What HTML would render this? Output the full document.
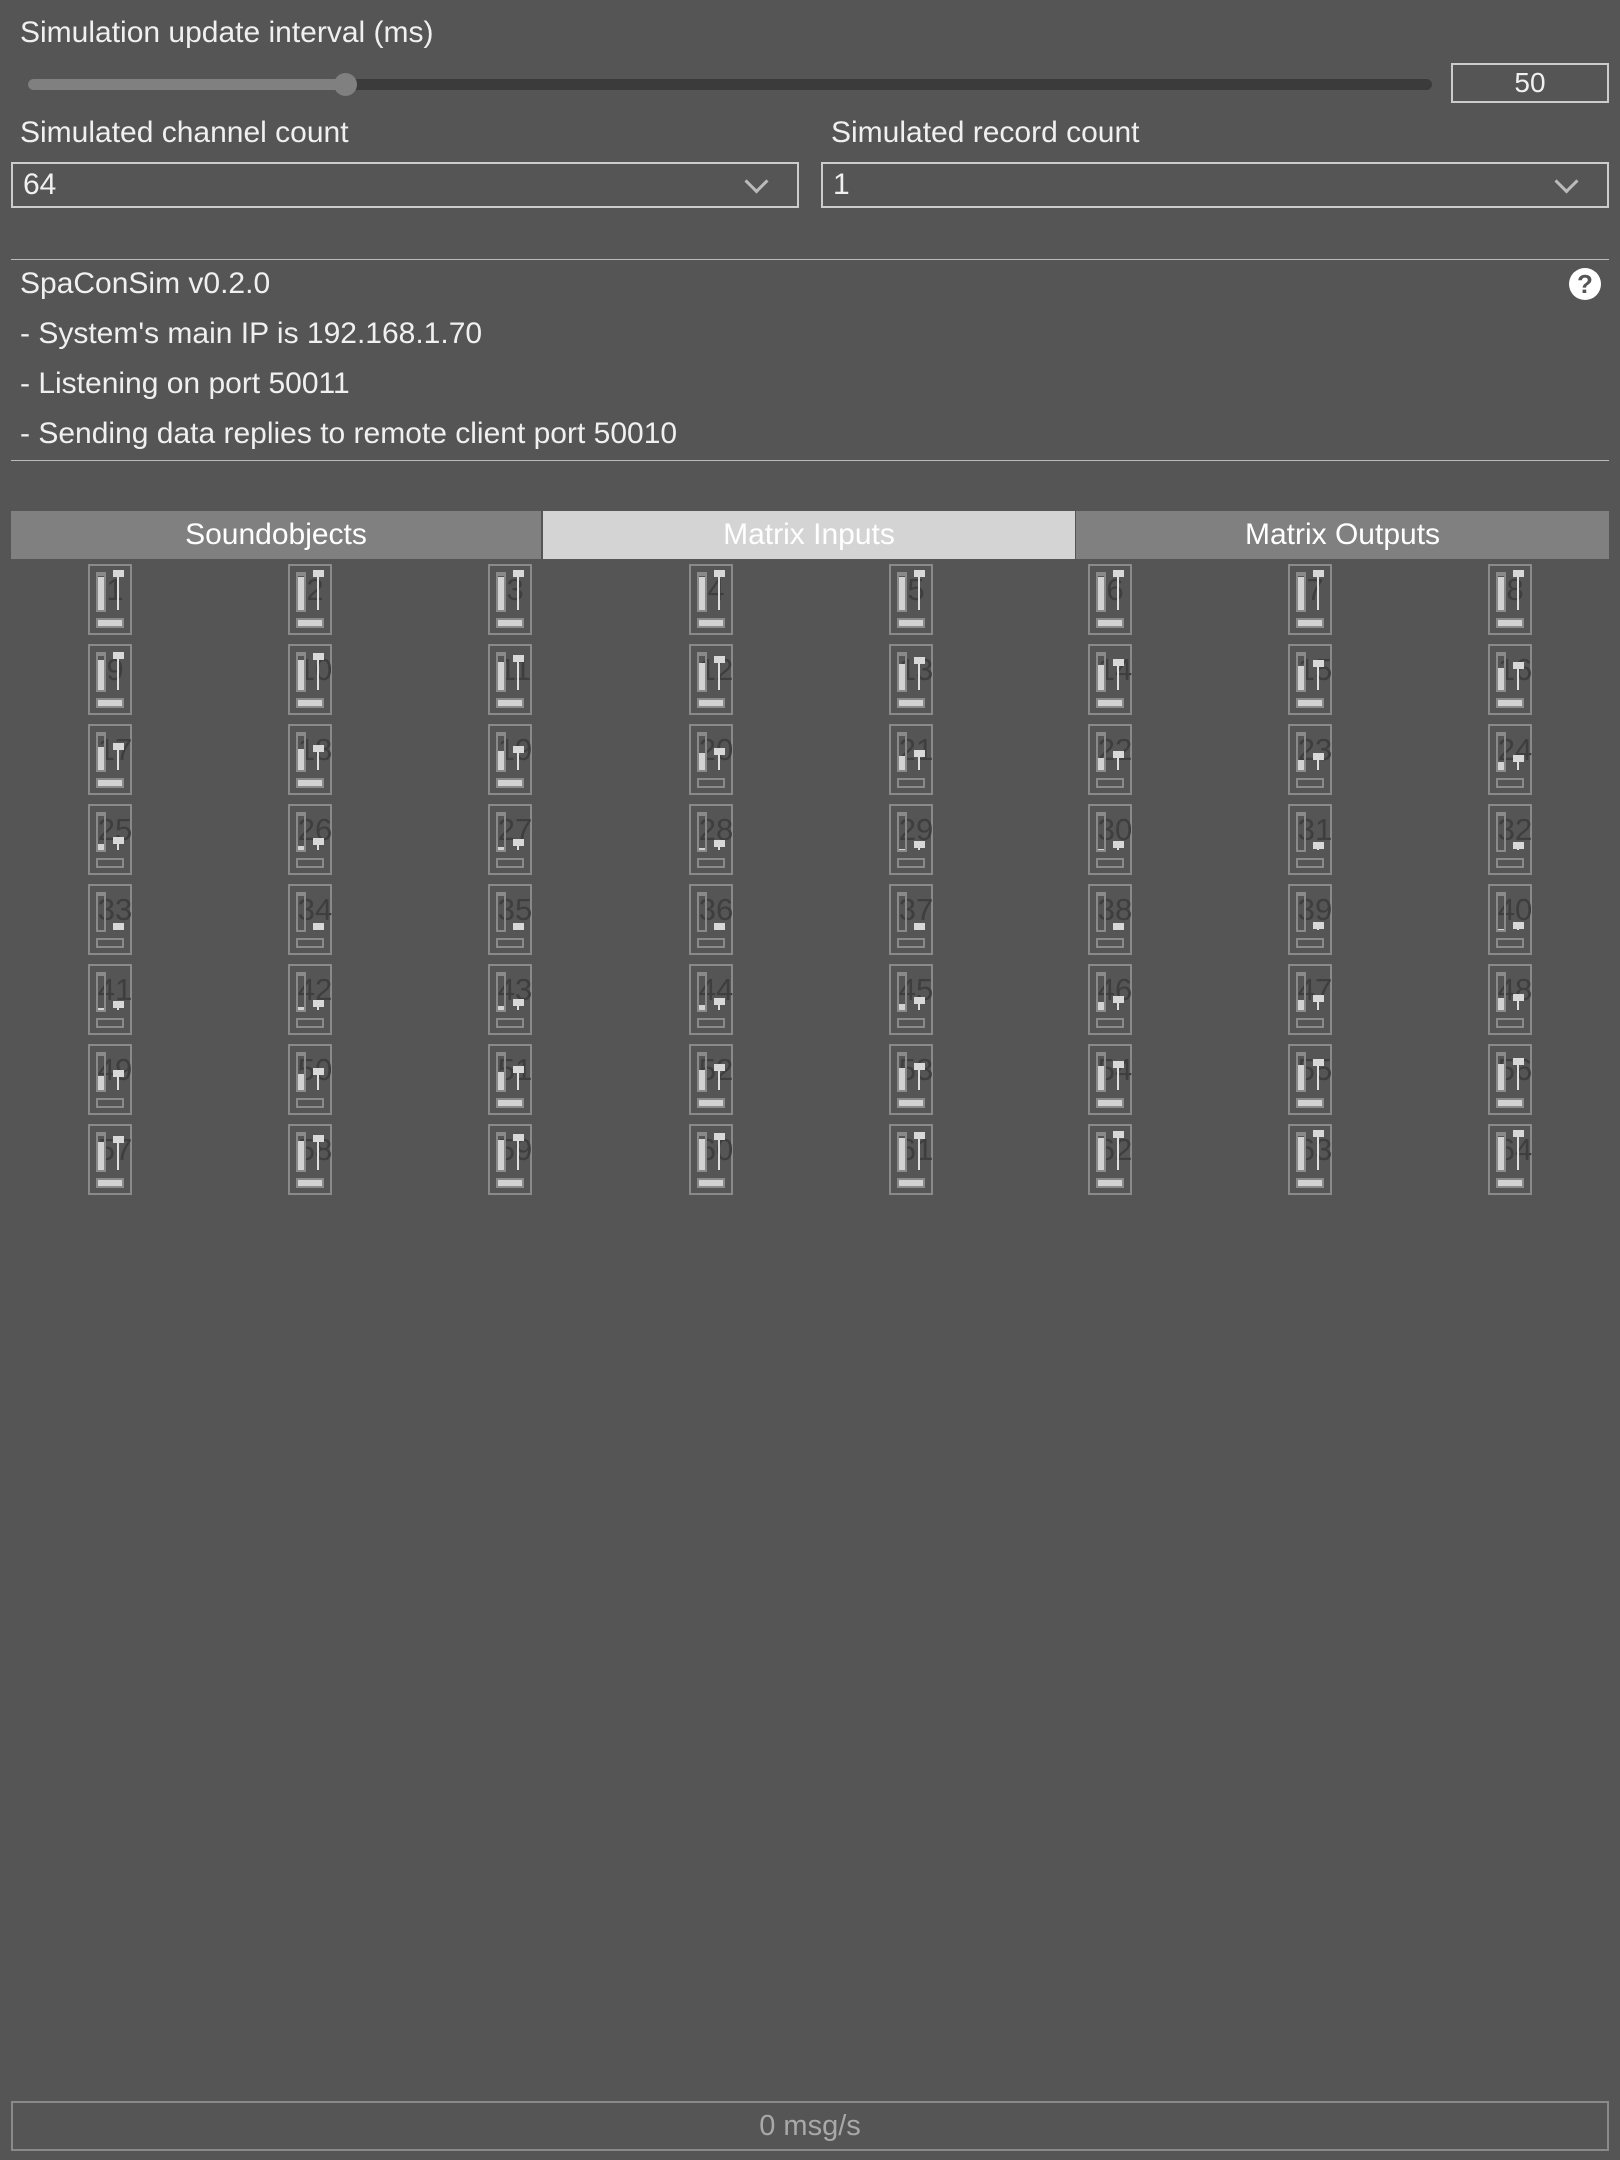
<!DOCTYPE html>
<html><head><meta charset="utf-8"><style>
*{margin:0;padding:0;box-sizing:border-box}
body{width:1620px;height:2160px;background:#555;font-family:"Liberation Sans",Arial,sans-serif;color:#f0f0f0;position:relative;overflow:hidden}
.a{position:absolute}
.lbl{font-size:30px;line-height:34px}
.box{border:2px solid #ccc}
.chev{position:absolute;width:17px;height:17px;border-right:3px solid #bbb;border-bottom:3px solid #bbb;transform:rotate(45deg)}
.hr{height:1px;background:#bbb;left:11px;width:1598px}
.tab{top:511px;height:48px;font-size:30px;line-height:48px;text-align:center;color:#fff}
.c{position:absolute;width:44px;height:71px;border:2px solid #8a8a8a}
.c span{position:absolute;left:3px;width:44px;text-align:center;top:8px;font-size:31px;color:#3e3e3e;line-height:32px}
.m{position:absolute;left:6px;top:6px;width:10px;height:40px;border:2px solid #8a8a8a;border-top:4px solid #8a8a8a}
.m b{position:absolute;left:0;bottom:0;width:6px;background:#d2d2d2}
.l{position:absolute;left:27px;width:2px;background:#ddd;bottom:23px}
.k{position:absolute;left:23px;width:11px;height:7px;background:#d8d8d8}
.s{position:absolute;left:6px;top:52px;width:28px;height:10px;border:2px solid #8a8a8a}
.s.on{background:#d2d2d2}
</style></head><body>
<div class="a lbl" style="left:20px;top:16px">Simulation update interval (ms)</div>
<div class="a" style="left:28px;top:79px;width:1404px;height:11px;border-radius:6px;background:#3b3b3b"></div>
<div class="a" style="left:28px;top:79px;width:320px;height:11px;border-radius:6px;background:#808080"></div>
<div class="a" style="left:334px;top:73px;width:23px;height:23px;border-radius:50%;background:#808080"></div>
<div class="a box" style="left:1451px;top:63px;width:158px;height:40px;font-size:28px;line-height:36px;text-align:center">50</div>
<div class="a lbl" style="left:20px;top:116px">Simulated channel count</div>
<div class="a lbl" style="left:831px;top:116px">Simulated record count</div>
<div class="a box" style="left:11px;top:162px;width:788px;height:46px"><div class="a" style="left:10px;top:4px;font-size:30px;line-height:34px">64</div><div class="chev" style="left:735px;top:9px"></div></div>
<div class="a box" style="left:821px;top:162px;width:788px;height:46px"><div class="a" style="left:10px;top:4px;font-size:30px;line-height:34px">1</div><div class="chev" style="left:735px;top:9px"></div></div>
<div class="a hr" style="top:259px"></div>
<div class="a lbl" style="left:20px;top:267px">SpaConSim v0.2.0</div>
<div class="a lbl" style="left:20px;top:317px">- System's main IP is 192.168.1.70</div>
<div class="a lbl" style="left:20px;top:367px">- Listening on port 50011</div>
<div class="a lbl" style="left:20px;top:417px">- Sending data replies to remote client port 50010</div>
<div class="a" style="left:1569px;top:268px;width:32px;height:32px;border-radius:50%;background:#fff;color:#555;font-weight:bold;font-size:26px;line-height:32px;text-align:center">?</div>
<div class="a hr" style="top:460px"></div>
<div class="a tab" style="left:11px;width:530px;background:#808080">Soundobjects</div>
<div class="a tab" style="left:543px;width:532px;background:#d4d4d4">Matrix Inputs</div>
<div class="a tab" style="left:1076px;width:533px;background:#808080">Matrix Outputs</div>
<div id="g">
<div class="c" style="left:88px;top:564px"><span>1</span><i class="m"><b style="height:33px"></b></i><i class="l" style="top:4px"></i><i class="k" style="top:4px"></i><i class="s on"></i></div>
<div class="c" style="left:288px;top:564px"><span>2</span><i class="m"><b style="height:33px"></b></i><i class="l" style="top:4px"></i><i class="k" style="top:4px"></i><i class="s on"></i></div>
<div class="c" style="left:488px;top:564px"><span>3</span><i class="m"><b style="height:33px"></b></i><i class="l" style="top:4px"></i><i class="k" style="top:4px"></i><i class="s on"></i></div>
<div class="c" style="left:689px;top:564px"><span>4</span><i class="m"><b style="height:33px"></b></i><i class="l" style="top:4px"></i><i class="k" style="top:4px"></i><i class="s on"></i></div>
<div class="c" style="left:889px;top:564px"><span>5</span><i class="m"><b style="height:33px"></b></i><i class="l" style="top:4px"></i><i class="k" style="top:4px"></i><i class="s on"></i></div>
<div class="c" style="left:1088px;top:564px"><span>6</span><i class="m"><b style="height:33px"></b></i><i class="l" style="top:4px"></i><i class="k" style="top:4px"></i><i class="s on"></i></div>
<div class="c" style="left:1288px;top:564px"><span>7</span><i class="m"><b style="height:33px"></b></i><i class="l" style="top:4px"></i><i class="k" style="top:4px"></i><i class="s on"></i></div>
<div class="c" style="left:1488px;top:564px"><span>8</span><i class="m"><b style="height:33px"></b></i><i class="l" style="top:4px"></i><i class="k" style="top:4px"></i><i class="s on"></i></div>
<div class="c" style="left:88px;top:644px"><span>9</span><i class="m"><b style="height:30px"></b></i><i class="l" style="top:6px"></i><i class="k" style="top:6px"></i><i class="s on"></i></div>
<div class="c" style="left:288px;top:644px"><span>10</span><i class="m"><b style="height:30px"></b></i><i class="l" style="top:7px"></i><i class="k" style="top:7px"></i><i class="s on"></i></div>
<div class="c" style="left:488px;top:644px"><span>11</span><i class="m"><b style="height:28px"></b></i><i class="l" style="top:9px"></i><i class="k" style="top:9px"></i><i class="s on"></i></div>
<div class="c" style="left:689px;top:644px"><span>12</span><i class="m"><b style="height:27px"></b></i><i class="l" style="top:10px"></i><i class="k" style="top:10px"></i><i class="s on"></i></div>
<div class="c" style="left:889px;top:644px"><span>13</span><i class="m"><b style="height:26px"></b></i><i class="l" style="top:11px"></i><i class="k" style="top:11px"></i><i class="s on"></i></div>
<div class="c" style="left:1088px;top:644px"><span>14</span><i class="m"><b style="height:25px"></b></i><i class="l" style="top:13px"></i><i class="k" style="top:13px"></i><i class="s on"></i></div>
<div class="c" style="left:1288px;top:644px"><span>15</span><i class="m"><b style="height:24px"></b></i><i class="l" style="top:14px"></i><i class="k" style="top:14px"></i><i class="s on"></i></div>
<div class="c" style="left:1488px;top:644px"><span>16</span><i class="m"><b style="height:22px"></b></i><i class="l" style="top:16px"></i><i class="k" style="top:16px"></i><i class="s on"></i></div>
<div class="c" style="left:88px;top:724px"><span>17</span><i class="m"><b style="height:23px"></b></i><i class="l" style="top:17px"></i><i class="k" style="top:17px"></i><i class="s on"></i></div>
<div class="c" style="left:288px;top:724px"><span>18</span><i class="m"><b style="height:21px"></b></i><i class="l" style="top:19px"></i><i class="k" style="top:19px"></i><i class="s on"></i></div>
<div class="c" style="left:488px;top:724px"><span>19</span><i class="m"><b style="height:19px"></b></i><i class="l" style="top:20px"></i><i class="k" style="top:20px"></i><i class="s on"></i></div>
<div class="c" style="left:689px;top:724px"><span>20</span><i class="m"><b style="height:17px"></b></i><i class="l" style="top:22px"></i><i class="k" style="top:22px"></i><i class="s"></i></div>
<div class="c" style="left:889px;top:724px"><span>21</span><i class="m"><b style="height:14px"></b></i><i class="l" style="top:24px"></i><i class="k" style="top:24px"></i><i class="s"></i></div>
<div class="c" style="left:1088px;top:724px"><span>22</span><i class="m"><b style="height:12px"></b></i><i class="l" style="top:25px"></i><i class="k" style="top:25px"></i><i class="s"></i></div>
<div class="c" style="left:1288px;top:724px"><span>23</span><i class="m"><b style="height:10px"></b></i><i class="l" style="top:27px"></i><i class="k" style="top:27px"></i><i class="s"></i></div>
<div class="c" style="left:1488px;top:724px"><span>24</span><i class="m"><b style="height:8px"></b></i><i class="l" style="top:29px"></i><i class="k" style="top:29px"></i><i class="s"></i></div>
<div class="c" style="left:88px;top:804px"><span>25</span><i class="m"><b style="height:6px"></b></i><i class="l" style="top:31px"></i><i class="k" style="top:31px"></i><i class="s"></i></div>
<div class="c" style="left:288px;top:804px"><span>26</span><i class="m"><b style="height:4px"></b></i><i class="l" style="top:32px"></i><i class="k" style="top:32px"></i><i class="s"></i></div>
<div class="c" style="left:488px;top:804px"><span>27</span><i class="m"><b style="height:3px"></b></i><i class="l" style="top:33px"></i><i class="k" style="top:33px"></i><i class="s"></i></div>
<div class="c" style="left:689px;top:804px"><span>28</span><i class="m"><b style="height:2px"></b></i><i class="l" style="top:34px"></i><i class="k" style="top:34px"></i><i class="s"></i></div>
<div class="c" style="left:889px;top:804px"><span>29</span><i class="m"><b style="height:1px"></b></i><i class="l" style="top:35px"></i><i class="k" style="top:35px"></i><i class="s"></i></div>
<div class="c" style="left:1088px;top:804px"><span>30</span><i class="m"><b style="height:1px"></b></i><i class="l" style="top:35px"></i><i class="k" style="top:35px"></i><i class="s"></i></div>
<div class="c" style="left:1288px;top:804px"><span>31</span><i class="m"><b style="height:0px"></b></i><i class="l" style="top:36px"></i><i class="k" style="top:36px"></i><i class="s"></i></div>
<div class="c" style="left:1488px;top:804px"><span>32</span><i class="m"><b style="height:0px"></b></i><i class="l" style="top:36px"></i><i class="k" style="top:36px"></i><i class="s"></i></div>
<div class="c" style="left:88px;top:884px"><span>33</span><i class="m"><b style="height:0px"></b></i><i class="l" style="top:37px"></i><i class="k" style="top:37px"></i><i class="s"></i></div>
<div class="c" style="left:288px;top:884px"><span>34</span><i class="m"><b style="height:0px"></b></i><i class="l" style="top:37px"></i><i class="k" style="top:37px"></i><i class="s"></i></div>
<div class="c" style="left:488px;top:884px"><span>35</span><i class="m"><b style="height:0px"></b></i><i class="l" style="top:37px"></i><i class="k" style="top:37px"></i><i class="s"></i></div>
<div class="c" style="left:689px;top:884px"><span>36</span><i class="m"><b style="height:0px"></b></i><i class="l" style="top:37px"></i><i class="k" style="top:37px"></i><i class="s"></i></div>
<div class="c" style="left:889px;top:884px"><span>37</span><i class="m"><b style="height:0px"></b></i><i class="l" style="top:37px"></i><i class="k" style="top:37px"></i><i class="s"></i></div>
<div class="c" style="left:1088px;top:884px"><span>38</span><i class="m"><b style="height:0px"></b></i><i class="l" style="top:37px"></i><i class="k" style="top:37px"></i><i class="s"></i></div>
<div class="c" style="left:1288px;top:884px"><span>39</span><i class="m"><b style="height:0px"></b></i><i class="l" style="top:36px"></i><i class="k" style="top:36px"></i><i class="s"></i></div>
<div class="c" style="left:1488px;top:884px"><span>40</span><i class="m"><b style="height:1px"></b></i><i class="l" style="top:36px"></i><i class="k" style="top:36px"></i><i class="s"></i></div>
<div class="c" style="left:88px;top:964px"><span>41</span><i class="m"><b style="height:2px"></b></i><i class="l" style="top:35px"></i><i class="k" style="top:35px"></i><i class="s"></i></div>
<div class="c" style="left:288px;top:964px"><span>42</span><i class="m"><b style="height:3px"></b></i><i class="l" style="top:34px"></i><i class="k" style="top:34px"></i><i class="s"></i></div>
<div class="c" style="left:488px;top:964px"><span>43</span><i class="m"><b style="height:4px"></b></i><i class="l" style="top:33px"></i><i class="k" style="top:33px"></i><i class="s"></i></div>
<div class="c" style="left:689px;top:964px"><span>44</span><i class="m"><b style="height:5px"></b></i><i class="l" style="top:32px"></i><i class="k" style="top:32px"></i><i class="s"></i></div>
<div class="c" style="left:889px;top:964px"><span>45</span><i class="m"><b style="height:6px"></b></i><i class="l" style="top:31px"></i><i class="k" style="top:31px"></i><i class="s"></i></div>
<div class="c" style="left:1088px;top:964px"><span>46</span><i class="m"><b style="height:8px"></b></i><i class="l" style="top:30px"></i><i class="k" style="top:30px"></i><i class="s"></i></div>
<div class="c" style="left:1288px;top:964px"><span>47</span><i class="m"><b style="height:10px"></b></i><i class="l" style="top:29px"></i><i class="k" style="top:29px"></i><i class="s"></i></div>
<div class="c" style="left:1488px;top:964px"><span>48</span><i class="m"><b style="height:12px"></b></i><i class="l" style="top:28px"></i><i class="k" style="top:28px"></i><i class="s"></i></div>
<div class="c" style="left:88px;top:1044px"><span>49</span><i class="m"><b style="height:14px"></b></i><i class="l" style="top:24px"></i><i class="k" style="top:24px"></i><i class="s"></i></div>
<div class="c" style="left:288px;top:1044px"><span>50</span><i class="m"><b style="height:16px"></b></i><i class="l" style="top:22px"></i><i class="k" style="top:22px"></i><i class="s"></i></div>
<div class="c" style="left:488px;top:1044px"><span>51</span><i class="m"><b style="height:18px"></b></i><i class="l" style="top:20px"></i><i class="k" style="top:20px"></i><i class="s on"></i></div>
<div class="c" style="left:689px;top:1044px"><span>52</span><i class="m"><b style="height:20px"></b></i><i class="l" style="top:18px"></i><i class="k" style="top:18px"></i><i class="s on"></i></div>
<div class="c" style="left:889px;top:1044px"><span>53</span><i class="m"><b style="height:22px"></b></i><i class="l" style="top:17px"></i><i class="k" style="top:17px"></i><i class="s on"></i></div>
<div class="c" style="left:1088px;top:1044px"><span>54</span><i class="m"><b style="height:24px"></b></i><i class="l" style="top:15px"></i><i class="k" style="top:15px"></i><i class="s on"></i></div>
<div class="c" style="left:1288px;top:1044px"><span>55</span><i class="m"><b style="height:25px"></b></i><i class="l" style="top:13px"></i><i class="k" style="top:13px"></i><i class="s on"></i></div>
<div class="c" style="left:1488px;top:1044px"><span>56</span><i class="m"><b style="height:26px"></b></i><i class="l" style="top:12px"></i><i class="k" style="top:12px"></i><i class="s on"></i></div>
<div class="c" style="left:88px;top:1124px"><span>57</span><i class="m"><b style="height:28px"></b></i><i class="l" style="top:10px"></i><i class="k" style="top:10px"></i><i class="s on"></i></div>
<div class="c" style="left:288px;top:1124px"><span>58</span><i class="m"><b style="height:29px"></b></i><i class="l" style="top:9px"></i><i class="k" style="top:9px"></i><i class="s on"></i></div>
<div class="c" style="left:488px;top:1124px"><span>59</span><i class="m"><b style="height:30px"></b></i><i class="l" style="top:8px"></i><i class="k" style="top:8px"></i><i class="s on"></i></div>
<div class="c" style="left:689px;top:1124px"><span>60</span><i class="m"><b style="height:31px"></b></i><i class="l" style="top:7px"></i><i class="k" style="top:7px"></i><i class="s on"></i></div>
<div class="c" style="left:889px;top:1124px"><span>61</span><i class="m"><b style="height:32px"></b></i><i class="l" style="top:6px"></i><i class="k" style="top:6px"></i><i class="s on"></i></div>
<div class="c" style="left:1088px;top:1124px"><span>62</span><i class="m"><b style="height:32px"></b></i><i class="l" style="top:5px"></i><i class="k" style="top:5px"></i><i class="s on"></i></div>
<div class="c" style="left:1288px;top:1124px"><span>63</span><i class="m"><b style="height:33px"></b></i><i class="l" style="top:4px"></i><i class="k" style="top:4px"></i><i class="s on"></i></div>
<div class="c" style="left:1488px;top:1124px"><span>64</span><i class="m"><b style="height:33px"></b></i><i class="l" style="top:4px"></i><i class="k" style="top:4px"></i><i class="s on"></i></div>
</div>
<div class="a" style="left:11px;top:2101px;width:1598px;height:50px;border:2px solid #8a8a8a;color:#a8a8a8;font-size:29px;line-height:46px;text-align:center">0 msg/s</div>
</body></html>
